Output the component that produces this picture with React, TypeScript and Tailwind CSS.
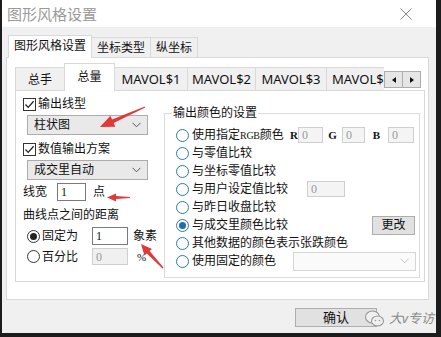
import React from 'react'

function Radio({ on, blue }: { on?: boolean; blue?: boolean }) {
  return (
    <span
      className={`flex h-[13px] w-[13px] shrink-0 items-center justify-center rounded-full border bg-white ${
        blue ? 'border-[#2a7ab0]' : 'border-[#333]'
      }`}
    >
      {on && <span className={`h-[7px] w-[7px] rounded-full ${blue ? 'bg-[#1f6fa6]' : 'bg-[#222]'}`} />}
    </span>
  )
}

function Check() {
  return (
    <span className="flex h-[13px] w-[13px] shrink-0 items-center justify-center border border-[#333] bg-white">
      <svg width="11" height="11" viewBox="0 0 11 11">
        <path d="M1.5 5.5 L4.2 8.4 L9.6 2.2" fill="none" stroke="#222" strokeWidth="1.3" />
      </svg>
    </span>
  )
}

function Chevron({ off }: { off?: boolean }) {
  return (
    <svg width="9" height="6" viewBox="0 0 9 6">
      <path d="M0.5 0.8 L4.5 4.8 L8.5 0.8" fill="none" stroke={off ? '#c4c4c4' : '#555'} strokeWidth="1" />
    </svg>
  )
}

function Combo({ text, className, off }: { text?: string; className: string; off?: boolean }) {
  return (
    <div
      className={`flex items-center justify-between border pl-[6px] pr-[6px] ${
        off ? 'border-[#d6d6d6] bg-[#fafafa]' : 'border-[#acacac] bg-[#e9e9e9]'
      } ${className}`}
    >
      <span className="text-[12px] leading-[16px]">{text}</span>
      <Chevron off={off} />
    </div>
  )
}

function Field({ v, off, className }: { v: string; off?: boolean; className: string }) {
  return (
    <div
      className={`flex items-center border px-[3px] font-['Liberation_Serif',serif] text-[12px] ${
        off ? 'border-[#cfcfcf] bg-[#f0f0f0] text-[#9a9a9a]' : 'border-[#7a7a7a] bg-white text-[#111]'
      } ${className}`}
    >
      {v}
    </div>
  )
}

function Opt({ on, children, className }: { on?: boolean; children: React.ReactNode; className?: string }) {
  return (
    <div className={`flex shrink-0 items-center gap-[3px] ${className ?? ''}`}>
      <Radio on={on} blue />
      <span className="whitespace-nowrap text-[12px] leading-[16px]">{children}</span>
    </div>
  )
}

const rgb = "font-['Liberation_Serif',serif] text-[11px] font-bold"

export default function App() {
  return (
    <div className="relative h-[337px] w-[441px] overflow-hidden bg-[#1c1c1c] font-['Noto_Sans','Noto_Sans_CJK_SC',sans-serif] text-[#111]">
      <div className="ml-[2px] flex h-[333px] w-[434px] flex-col bg-[#f0f0f0]">
        {/* title bar */}
        <div className="flex h-[27px] items-center justify-between bg-white pl-[5px] pr-[24px]">
          <span className="text-[15px] leading-[18px] text-[#9a9a9a]">图形风格设置</span>
          <svg width="12" height="12" viewBox="0 0 12 12">
            <path d="M0.5 0.5 L11.5 11.5 M11.5 0.5 L0.5 11.5" stroke="#8a8a8a" strokeWidth="1" />
          </svg>
        </div>

        {/* outer tabs */}
        <div className="mt-[8px] flex h-[22px] items-end pl-[6px] text-[12px]">
          <div className="relative z-10 -mb-px flex h-[23px] w-[84px] items-center justify-center border-x border-t border-[#d9d9d9] bg-white pb-[2px]">
            图形风格设置
          </div>
          <div className="flex h-[20px] w-[59px] items-center justify-center border-r border-t border-[#d9d9d9] bg-[#f0f0f0]">
            坐标类型
          </div>
          <div className="flex h-[20px] w-[47px] items-center justify-center border-r border-t border-[#d9d9d9] bg-[#f0f0f0]">
            纵坐标
          </div>
        </div>

        <div className="ml-[4px] h-[243px] w-[423px] border border-[#d9d9d9] bg-white">
          {/* inner tabs */}
          <div className="mt-[5px] flex h-[27px] items-end pl-[8px] text-[12px]">
            <div className="flex h-[23px] w-[49px] items-center justify-center border-l border-t border-[#d9d9d9] bg-[#f0f0f0] pt-[2px]">
              总手
            </div>
            <div className="relative z-10 -mb-px flex h-[28px] w-[51px] items-center justify-center border-x border-t border-[#d9d9d9] bg-white pb-[2px]">
              总量
            </div>
            <div className="flex h-[23px] w-[73px] items-center justify-center border-r border-t border-[#d9d9d9] bg-[#f0f0f0] pt-[2px] text-[13px]">
              MAVOL$1
            </div>
            <div className="flex h-[23px] w-[68px] items-center justify-center border-r border-t border-[#d9d9d9] bg-[#f0f0f0] pt-[2px] text-[13px]">
              MAVOL$2
            </div>
            <div className="flex h-[23px] w-[71px] items-center justify-center border-r border-t border-[#d9d9d9] bg-[#f0f0f0] pt-[2px] text-[13px]">
              MAVOL$3
            </div>
            <div className="flex h-[23px] w-[57px] items-center border-t border-[#d9d9d9] bg-[#f0f0f0] pl-[5px] pt-[2px] text-[13px]">
              MAVOL$
            </div>
            <div className="mb-[2px] flex h-[17px]">
              <div className="flex w-[19px] items-center justify-center border border-[#adadad] bg-[#e6e6e6]">
                <svg width="4" height="6" viewBox="0 0 4 6">
                  <path d="M4 0 L0 3 L4 6 Z" fill="#111" />
                </svg>
              </div>
              <div className="flex w-[18px] items-center justify-center border-y border-r border-[#adadad] bg-[#e6e6e6]">
                <svg width="4" height="6" viewBox="0 0 4 6">
                  <path d="M0 0 L4 3 L0 6 Z" fill="#111" />
                </svg>
              </div>
            </div>
          </div>

          {/* inner page */}
          <div className="ml-[8px] flex h-[192px] w-[410px] border border-[#d9d9d9] bg-white text-[12px] leading-[16px]">
            <div className="flex w-[148px] shrink-0 flex-col pl-[7px]">
              <div className="mt-[5px] flex h-[16px] items-center gap-[2px]">
                <Check />
                <span>输出线型</span>
              </div>
              <Combo text="柱状图" className="ml-[4px] mt-[3px] h-[20px] w-[121px]" />
              <div className="mt-[6px] flex h-[16px] items-center gap-[2px]">
                <Check />
                <span>数值输出方案</span>
              </div>
              <Combo text="成交里自动" className="ml-[4px] mt-[3px] h-[20px] w-[121px]" />
              <div className="mt-[3px] flex h-[18px] items-center">
                <span className="w-[34px]">线宽</span>
                <Field v="1" className="h-[18px] w-[29px]" />
                <span className="ml-[7px]">点</span>
              </div>
              <div className="mt-[6px] h-[16px]">曲线点之间的距离</div>
              <div className="mt-[4px] flex h-[18px] items-center pl-[4px]">
                <div className="flex w-[65px] items-center gap-[2px]">
                  <Radio on />
                  <span>固定为</span>
                </div>
                <Field v="1" className="h-[18px] w-[36px]" />
                <span className="ml-[5px]">象素</span>
              </div>
              <div className="mt-[3px] flex h-[17px] items-center pl-[4px]">
                <div className="flex w-[65px] items-center gap-[2px]">
                  <Radio />
                  <span>百分比</span>
                </div>
                <Field v="0" off className="h-[17px] w-[36px]" />
                <span className="ml-[9px] font-['Liberation_Serif',serif] text-[11px]">%</span>
              </div>
            </div>

            <fieldset className="mt-[14px] h-[173px] w-[256px] border border-[#dcdcdc]">
              <legend className="ml-[7px] px-[1px] text-[12px] leading-[16px]">输出颜色的设置</legend>
              <div className="mt-[5px] flex flex-col pl-[11px]">
                <div className="flex h-[18px] items-center">
                  <Opt className="w-[114px]">
                    使用指定<span className="font-['Liberation_Serif',serif] text-[10px] tracking-[-0.3px]">RGB</span>颜色
                  </Opt>
                  <span className={`w-[8px] ${rgb}`}>R</span>
                  <Field v="0" off className="h-[16px] w-[25px] bg-[#f4f4f4]" />
                  <span className={`w-[19px] text-center ${rgb}`}>G</span>
                  <Field v="0" off className="h-[16px] w-[23px] bg-[#f4f4f4]" />
                  <span className={`w-[23px] text-center ${rgb}`}>B</span>
                  <Field v="0" off className="h-[16px] w-[26px] bg-[#f4f4f4]" />
                </div>
                <div className="flex h-[18px] items-center">
                  <Opt>与零值比较</Opt>
                </div>
                <div className="flex h-[18px] items-center">
                  <Opt>与坐标零值比较</Opt>
                </div>
                <div className="flex h-[18px] items-center">
                  <Opt className="w-[131px]">与用户设定值比较</Opt>
                  <Field v="0" off className="h-[16px] w-[38px] bg-[#f4f4f4]" />
                </div>
                <div className="flex h-[18px] items-center">
                  <Opt>与昨日收盘比较</Opt>
                </div>
                <div className="flex h-[18px] items-center">
                  <Opt on>与成交里颜色比较</Opt>
                  <div className="ml-auto mr-[4px] flex h-[19px] w-[43px] items-center justify-center border border-[#adadad] bg-[#e1e1e1]">
                    更改
                  </div>
                </div>
                <div className="flex h-[18px] items-center">
                  <Opt>其他数据的颜色表示张跌颜色</Opt>
                </div>
                <div className="flex h-[18px] items-center">
                  <Opt className="w-[117px]">使用固定的颜色</Opt>
                  <Combo off className="h-[19px] w-[123px]" />
                </div>
              </div>
            </fieldset>
          </div>
        </div>

        {/* footer */}
        <div className="mt-[8px] flex">
          <div className="ml-[293px] flex h-[19px] w-[82px] items-center justify-center border border-[#adadad] bg-[#e1e1e1] text-[13px]">
            确认
          </div>
        </div>
      </div>

      {/* watermark */}
      <div className="absolute left-[364px] top-[309px] flex items-center gap-[3px] text-[13px] text-[#8c8c8c]">
        <svg width="22" height="20" viewBox="0 0 22 20">
          <ellipse cx="8.5" cy="8" rx="7" ry="6" fill="#f0f0f0" stroke="#9a9a9a" strokeWidth="1.1" />
          <ellipse cx="13.5" cy="12" rx="6" ry="5" fill="#f0f0f0" stroke="#9a9a9a" strokeWidth="1.1" />
          <circle cx="11.5" cy="11.5" r="0.8" fill="#9a9a9a" />
          <circle cx="15.5" cy="11.5" r="0.8" fill="#9a9a9a" />
        </svg>
        <span className="italic">大v专访</span>
      </div>

      {/* red annotation arrows */}
      <svg className="pointer-events-none absolute left-0 top-0" width="441" height="337" viewBox="0 0 441 337">
        <g fill="#e0393a">
          <polygon points="100,127 115.3,126.8 113.7,123.1 145.2,107.5 144.8,106.5 112.1,119.5 110.4,115.8" />
          <polygon points="107,197.5 116,201.5 116,199 130,198 130,197 116,196 116,193.5" />
          <polygon points="141,244 152,249 149.6,251.1 163.5,267.6 162.5,268.4 146.8,253.5 144.4,255.6" />
        </g>
      </svg>
    </div>
  )
}
